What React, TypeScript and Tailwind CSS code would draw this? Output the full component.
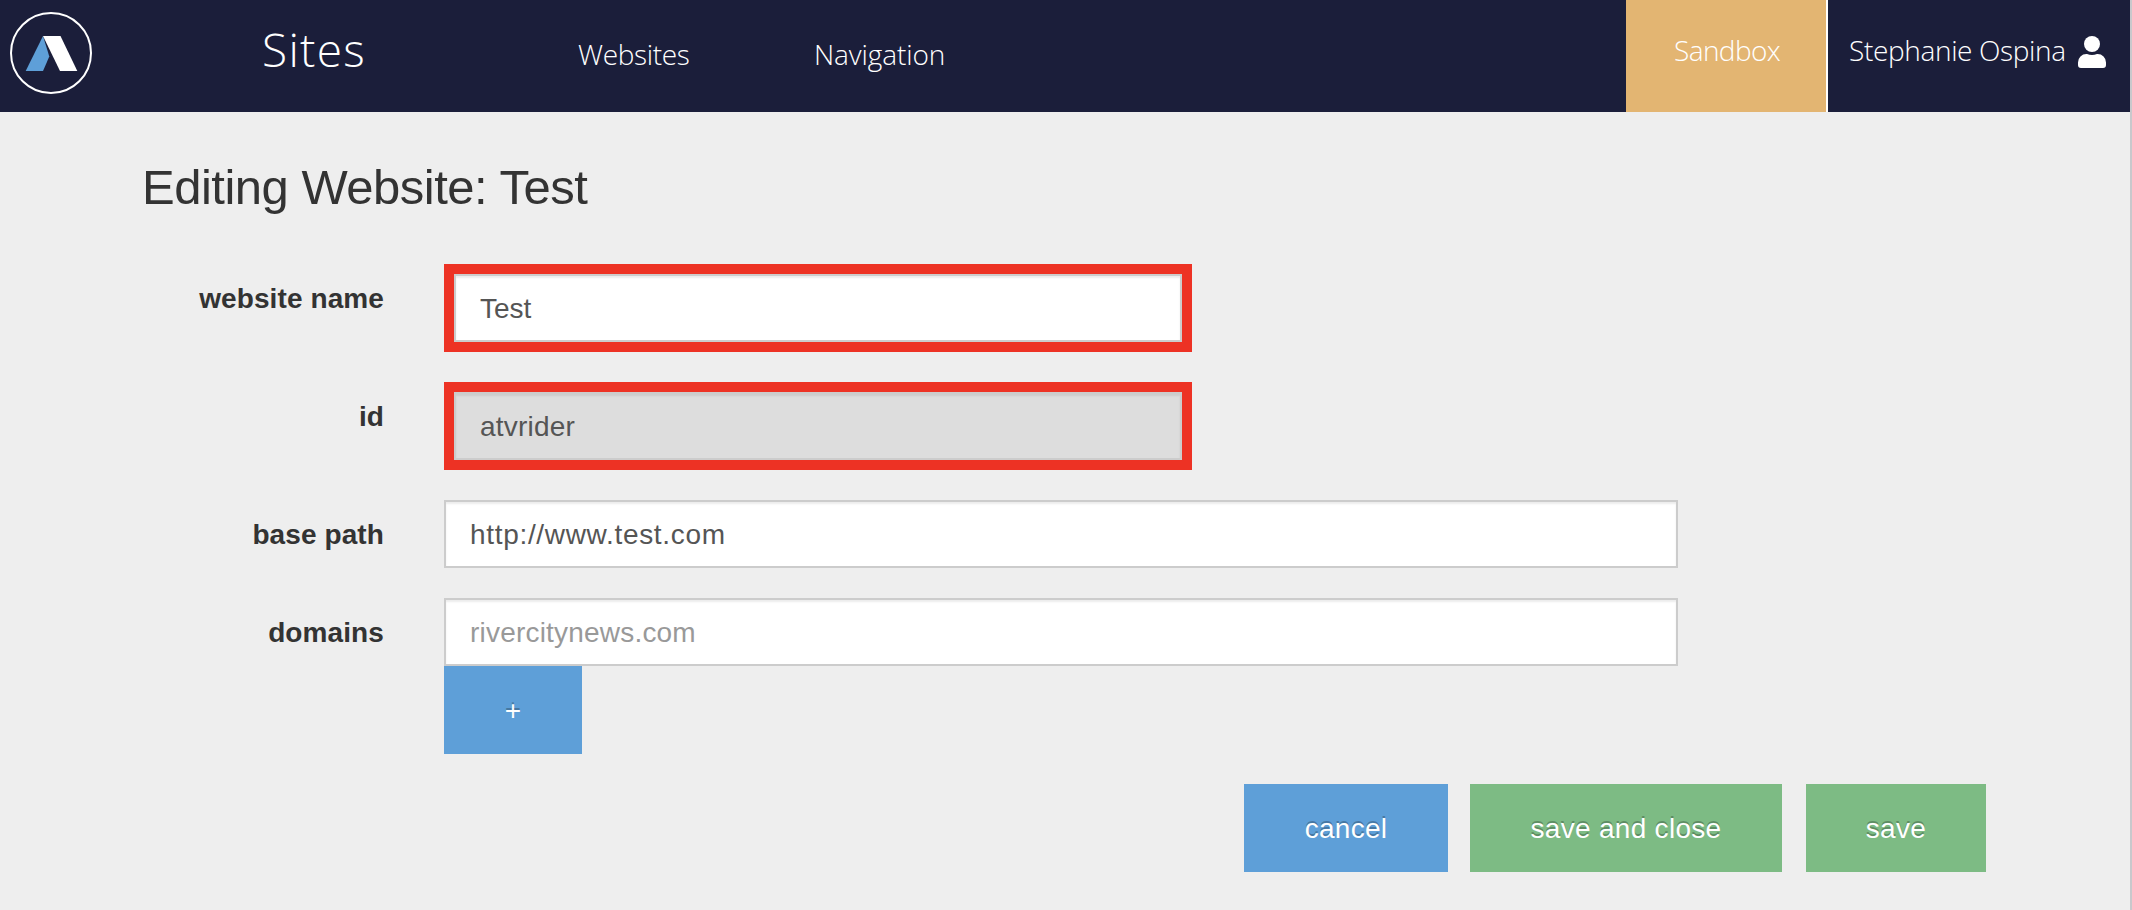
import type { ReactNode } from "react";

function Logo() {
  return (
    <svg className="h-[82px] w-[82px] shrink-0" viewBox="0 0 82 82">
      <circle cx="41" cy="41" r="40" fill="none" stroke="#fff" strokeWidth="2" />
      <path d="M33 24L39.3 44.5L33 59H15.7Z" fill="#5e9fd8" />
      <path d="M33 24H50.5L67.3 59H50Z" fill="#fff" />
    </svg>
  );
}

function UserIcon() {
  return (
    <svg className="mt-9 ml-[13px] h-8 w-7 shrink-0" viewBox="0 0 28 32">
      <circle cx="14" cy="8" r="8" fill="#fff" />
      <path d="M8.400 18H9Q14 20.200 19 18H19.600A8.400 8.400 0 0 1 28 26.400V29Q28 32 25 32H3Q0 32 0 29V26.400A8.400 8.400 0 0 1 8.400 18Z" fill="#fff" />
    </svg>
  );
}

function Header() {
  return (
    <header className="flex h-28 bg-[#1b1e3a] font-['Open_Sans',sans-serif] font-light whitespace-nowrap text-white">
      <div className="flex w-[262px] shrink-0 pt-3 pl-[10px]">
        <Logo />
      </div>
      <div className="w-[316px] shrink-0 pt-[17px] text-[46px] leading-[64px] tracking-[1.3px]">Sites</div>
      <nav className="flex flex-1 pt-[34px] text-[28px] leading-10">
        <a className="w-[236px] tracking-[-0.35px]">Websites</a>
        <a className="tracking-[-0.1px]">Navigation</a>
      </nav>
      <div className="w-[202px] border-r-2 border-white bg-[#e3b572] pt-[30px] pl-12 text-[28px] leading-10 tracking-[-0.6px]">Sandbox</div>
      <div className="flex w-[302px] pl-[21px]">
        <span className="w-[216px] pt-[30px] text-[28px] leading-10 tracking-[-0.35px]">Stephanie Ospina</span>
        <UserIcon />
      </div>
    </header>
  );
}

function Row({ label, children }: { label: string; children: ReactNode }) {
  return (
    <div className="flex">
      <label className="w-[384px] shrink-0 pt-[15px] text-right text-[28px] leading-10 font-bold tracking-[0.1px] text-[#333]">{label}</label>
      <div className="ml-[60px]">{children}</div>
    </div>
  );
}

const field =
  "block h-[68px] border-2 border-[#ccc] px-6 pt-0.5 text-[28px] text-[#555] shadow-[inset_0_2px_2px_rgba(0,0,0,0.075)] outline-none placeholder:text-[#999]";

const button =
  "h-[88px] pt-0.5 text-[28px] tracking-[0.3px] text-white [text-shadow:0_-2px_0_rgba(0,0,0,0.25)]";

export default function App() {
  return (
    <div className="flex h-[910px] w-[2132px] overflow-hidden bg-[#eee] font-['Liberation_Sans',Arial,sans-serif]">
      <div className="flex-1">
        <Header />
        <h1 className="mt-[39px] ml-[142px] text-[49px] leading-[72px] tracking-[-0.5px] text-[#333]">Editing Website: Test</h1>
        <form className="mt-[41px] flex flex-col gap-[30px]">
          <Row label="website name">
            <div className="border-10 border-[#ed3224]">
              <input className={`${field} w-[728px] bg-white`} defaultValue="Test" />
            </div>
          </Row>
          <Row label="id">
            <div className="border-10 border-[#ed3224]">
              <input className={`${field} w-[728px] bg-[#ddd] tracking-[0.2px]`} defaultValue="atvrider" readOnly />
            </div>
          </Row>
          <Row label="base path">
            <input className={`${field} w-[1234px] bg-white tracking-[0.68px]`} defaultValue="http://www.test.com" />
          </Row>
          <Row label="domains">
            <input className={`${field} w-[1234px] bg-white tracking-[0.2px]`} placeholder="rivercitynews.com" />
            <button type="button" className={`${button} block w-[138px] bg-[#5e9fd8]`}>+</button>
          </Row>
          <div className="flex pl-[1244px]">
            <button type="button" className={`${button} w-[204px] bg-[#5e9fd8]`}>cancel</button>
            <button type="button" className={`${button} ml-[22px] w-[312px] bg-[#7dbb84]`}>save and close</button>
            <button type="button" className={`${button} ml-6 w-[180px] bg-[#7dbb84]`}>save</button>
          </div>
        </form>
      </div>
      <div className="w-0.5 bg-[#c8c8cc]" />
    </div>
  );
}
